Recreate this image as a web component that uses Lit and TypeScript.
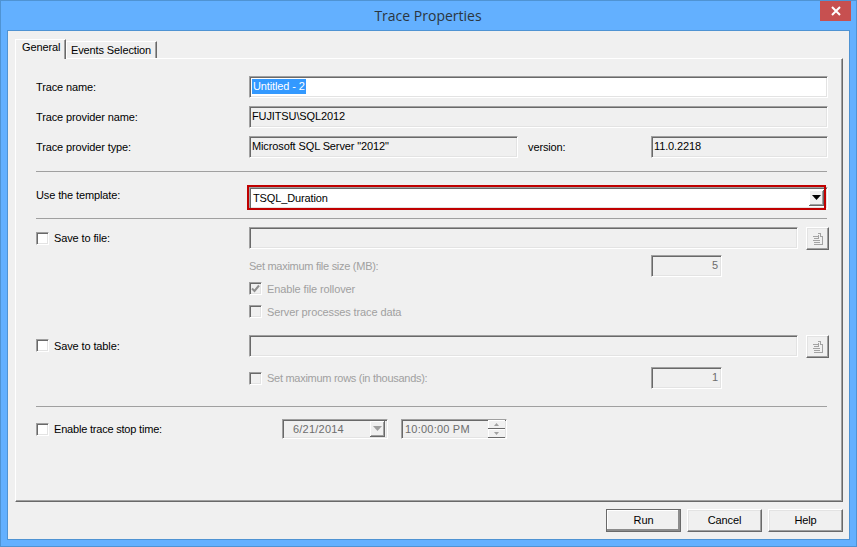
import { LitElement, html, css, svg } from "lit";
import { customElement } from "lit/decorators.js";

const fileIcon = html`<svg class="file-icon" width="10" height="12" viewBox="0 0 10 12" fill="none" stroke="#a3a3a3" shape-rendering="crispEdges">
  <path d="M5 .5h2M7.5 0v3M0 3.5h5M5.5 2v3M7 3.5h2.5v8H1M9 2.5v1M1 5.5h5M0 7.5h7M1 9.5h6" />
</svg>`;

const check = svg`<path d="M2 5.5l2.5 2.5L9 2.5" fill="none" stroke="#8f8f8f" stroke-width="2" />`;

@customElement("app-root")
export class AppRoot extends LitElement {
  static styles = css`
    :host {
      display: block;
      width: 857px;
      height: 547px;
      font-family: "Liberation Sans", Arial, sans-serif;
      font-size: 11px;
      letter-spacing: -0.12px;
      color: #000;
      overflow: hidden;
    }
    * { box-sizing: border-box; }
    .window {
      height: 547px;
      display: flex;
      flex-direction: column;
      background: #63b0ff;
      border: 1px solid #4f93d3;
      padding: 0 6px 6px;
    }
    .titlebar {
      height: 29px;
      flex: none;
      display: grid;
      grid-template-columns: 1fr auto 1fr;
      margin-right: -1px;
    }
    .title {
      grid-column: 2;
      font-family: "Open Sans", "Noto Sans", sans-serif;
      font-size: 14px;
      letter-spacing: 0;
      line-height: 29px;
      color: #2b3640;
      margin-left: -2px;
      white-space: nowrap;
    }
    .close {
      grid-column: 3;
      justify-self: end;
      width: 31px;
      height: 20px;
      background: #c75050;
      display: flex;
      align-items: center;
      justify-content: center;
    }
    .client {
      flex: 1;
      display: flex;
      flex-direction: column;
      background: #f0f0f0;
      border: 1px solid #4f93d3;
      padding: 8px 6px 0 7px;
    }
    .tabs {
      height: 19px;
      flex: none;
      display: flex;
      align-items: flex-end;
    }
    .tab {
      background: #f0f0f0;
      border-top: 1px solid #fff;
      border-left: 1px solid #fff;
      border-right: 1px solid #696969;
      box-shadow: inset -1px 0 0 #a0a0a0;
      white-space: nowrap;
    }
    .tab.active {
      width: 51px;
      height: 20px;
      margin-bottom: -1px;
      padding: 0 0 0 6px;
      line-height: 14px;
      position: relative;
      z-index: 1;
    }
    .tab.other {
      width: 91px;
      height: 17px;
      padding-left: 4px;
      line-height: 16px;
    }
    .pane {
      height: 444px;
      flex: none;
      border-top: 1px solid #fff;
      border-left: 1px solid #fff;
      border-right: 1px solid #696969;
      border-bottom: 1px solid #696969;
      box-shadow: inset -1px -1px 0 #a0a0a0;
      padding: 17px 14px 0 20px;
      display: flex;
      flex-direction: column;
    }
    .row { display: flex; align-items: center; height: 22px; flex: none; }
    .label { width: 213px; flex: none; white-space: nowrap; }
    .sep { height: 1px; flex: none; background: #a0a0a0; margin-right: 1px; }
    .field {
      height: 22px;
      flex: 1;
      min-width: 0;
      border: 1px solid;
      border-color: #a0a0a0 #fff #fff #a0a0a0;
      box-shadow: inset 1px 1px 0 #696969, inset -1px -1px 0 #e3e3e3;
      padding: 2px 2px 0;
      line-height: 15px;
      white-space: nowrap;
      overflow: hidden;
    }
    .white { background: #fff; }
    .sel { background: #3399ff; color: #fff; display: inline-block; padding: 0 1px; height: 15px; }
    .type-box { flex: none; width: 269px; }
    .ver-label { flex: none; width: 133px; padding-left: 10px; }
    .mt8 { margin-top: 8px; }
    .mt13 { margin-top: 13px; }
    .mt5 { margin-top: 5px; }
    .mt9 { margin-top: 9px; }
    .mt10 { margin-top: 10px; }
    .mt12 { margin-top: 12px; }
    .mt15 { margin-top: 15px; }
    .mt17 { margin-top: 17px; }
    .combo-row { position: relative; }
    .combo-row .label { padding-bottom: 6px; }
    .combo { position: relative; padding: 3px 3px 0; }
    .combo-btn {
      position: absolute;
      top: 2px;
      right: 3px;
      width: 15px;
      height: 16px;
      background: #f0f0f0;
      border-right: 1px solid #696969;
      border-bottom: 1px solid #696969;
      box-shadow: inset 1px 1px 0 #fff, inset -1px -1px 0 #a0a0a0;
      display: flex;
      align-items: center;
      justify-content: center;
    }
    .highlight {
      position: absolute;
      left: 211px;
      top: -2px;
      width: 579px;
      height: 25px;
      border: 2px solid #c00000;
      pointer-events: none;
    }
    .browse-row { height: 23px; align-items: flex-start; }
    .browse-row .label { height: 22px; }
    .browse-row .label.table-label { height: 21px; }
    .check-label { display: flex; align-items: center; gap: 5px; white-space: nowrap; }
    .cb {
      width: 13px;
      height: 13px;
      flex: none;
      border: 1px solid;
      border-color: #a0a0a0 #fff #fff #a0a0a0;
      box-shadow: inset 1px 1px 0 #696969, inset -1px -1px 0 #e3e3e3;
      background: #f0f0f0;
      display: block;
      overflow: hidden;
    }
    .cb.on { background: #fff; }
    .cb svg { display: block; }
    .browse {
      width: 23px;
      height: 23px;
      flex: none;
      margin: 0 -1px 0 8px;
      background: #f0f0f0;
      border: 1px solid;
      border-color: #fff #696969 #696969 #fff;
      box-shadow: inset -1px -1px 0 #a0a0a0, inset 1px 1px 0 #e3e3e3;
      display: flex;
      align-items: center;
      justify-content: center;
    }
    .disabled { color: #a0a0a0; }
    .indent { padding-left: 213px; }
    .wide-label { width: 402px; flex: none; white-space: nowrap; letter-spacing: -0.28px; }
    .num {
      width: 71px;
      flex: none;
      text-align: right;
      padding-right: 3px;
      color: #6d6d6d;
    }
    .check-row { height: 13px; }
    .stop-row { height: 20px; }
    .stop-label { width: 246px; flex: none; letter-spacing: -0.2px; }
    .picker {
      flex: none;
      width: 106px;
      height: 20px;
      display: flex;
      align-items: center;
      color: #6d6d6d;
      padding: 0;
      line-height: 16px;
      letter-spacing: 0.22px;
    }
    .date { padding-left: 10px; justify-content: space-between; padding-right: 2px; }
    .time { margin-left: 13px; padding-left: 3px; justify-content: space-between; padding-right: 1px; }
    .date-btn {
      width: 15px;
      height: 16px;
      background: #f0f0f0;
      border-right: 1px solid #696969;
      border-bottom: 1px solid #696969;
      box-shadow: inset 1px 1px 0 #fff, inset -1px -1px 0 #a0a0a0;
      display: flex;
      align-items: center;
      justify-content: center;
    }
    .spin { width: 17px; height: 18px; display: flex; flex-direction: column; }
    .spin span {
      height: 9px;
      border-bottom: 1px solid #696969;
      box-shadow: inset 1px 1px 0 #fff;
      display: flex;
      align-items: center;
      justify-content: center;
    }
    .footer {
      flex: 1;
      display: flex;
      justify-content: flex-end;
      align-items: flex-start;
      gap: 6px;
      padding-top: 7px;
    }
    .btn {
      width: 75px;
      height: 23px;
      background: #f0f0f0;
      border: 1px solid;
      border-color: #fff #696969 #696969 #fff;
      box-shadow: inset -1px -1px 0 #a0a0a0, inset 1px 1px 0 #e3e3e3;
      text-align: center;
      line-height: 20px;
    }
    .btn.default {
      border-color: #696969;
      box-shadow: inset -2px -2px 0 #8c8c8c, inset 1px 1px 0 #fff;
    }
  `;

  private cb(on = false, checked = false) {
    return html`<span class="cb ${on ? "on" : ""}">
      ${checked ? html`<svg width="11" height="11" viewBox="0 0 11 11">${check}</svg>` : ""}
    </span>`;
  }

  render() {
    return html`
      <div class="window">
        <div class="titlebar">
          <div class="title">Trace Properties</div>
          <div class="close">
            <svg width="10" height="10" viewBox="0 0 10 10"><path d="M1 1l8 8M9 1l-8 8" stroke="#fff" stroke-width="2" /></svg>
          </div>
        </div>
        <div class="client">
          <div class="tabs">
            <div class="tab active">General</div>
            <div class="tab other">Events Selection</div>
          </div>
          <div class="pane">
            <div class="row">
              <div class="label">Trace name:</div>
              <div class="field white"><span class="sel">Untitled - 2</span></div>
            </div>
            <div class="row mt8">
              <div class="label">Trace provider name:</div>
              <div class="field">FUJITSU\\SQL2012</div>
            </div>
            <div class="row mt8">
              <div class="label">Trace provider type:</div>
              <div class="field type-box">Microsoft SQL Server "2012"</div>
              <div class="ver-label">version:</div>
              <div class="field">11.0.2218</div>
            </div>
            <div class="sep mt13"></div>
            <div class="row combo-row mt15">
              <div class="label">Use the template:</div>
              <div class="field white combo">
                TSQL_Duration
                <div class="combo-btn">
                  <svg width="9" height="5" viewBox="0 0 9 5"><path d="M0 0h9L4.500 5z" fill="#000" /></svg>
                </div>
              </div>
              <div class="highlight"></div>
            </div>
            <div class="sep mt9"></div>
            <div class="row browse-row mt8">
              <div class="label check-label">${this.cb(true)}Save to file:</div>
              <div class="field"></div>
              <div class="browse">${fileIcon}</div>
            </div>
            <div class="row indent mt5">
              <div class="wide-label disabled">Set maximum file size (MB):</div>
              <div class="field num">5</div>
            </div>
            <div class="row indent check-row mt5">
              <div class="check-label disabled">${this.cb(false, true)}Enable file rollover</div>
            </div>
            <div class="row indent check-row mt10">
              <div class="check-label disabled">${this.cb()}Server processes trace data</div>
            </div>
            <div class="row browse-row mt17">
              <div class="label check-label table-label">${this.cb(true)}Save to table:</div>
              <div class="field"></div>
              <div class="browse">${fileIcon}</div>
            </div>
            <div class="row indent mt9">
              <div class="wide-label check-label disabled">${this.cb()}Set maximum rows (in thousands):</div>
              <div class="field num">1</div>
            </div>
            <div class="sep mt17"></div>
            <div class="row stop-row mt12">
              <div class="stop-label check-label">${this.cb(true)}Enable trace stop time:</div>
              <div class="field picker date">
                6/21/2014
                <div class="date-btn">
                  <svg width="9" height="5" viewBox="0 0 9 5"><path d="M0 0h9L4.500 5z" fill="#a0a0a0" /></svg>
                </div>
              </div>
              <div class="field picker time">
                10:00:00 PM
                <div class="spin">
                  <span><svg width="5" height="3" viewBox="0 0 5 3"><path d="M0 3h5L2.500 0z" fill="#a0a0a0" /></svg></span>
                  <span><svg width="5" height="3" viewBox="0 0 5 3"><path d="M0 0h5L2.500 3z" fill="#a0a0a0" /></svg></span>
                </div>
              </div>
            </div>
          </div>
          <div class="footer">
            <div class="btn default">Run</div>
            <div class="btn">Cancel</div>
            <div class="btn">Help</div>
          </div>
        </div>
      </div>
    `;
  }
}
